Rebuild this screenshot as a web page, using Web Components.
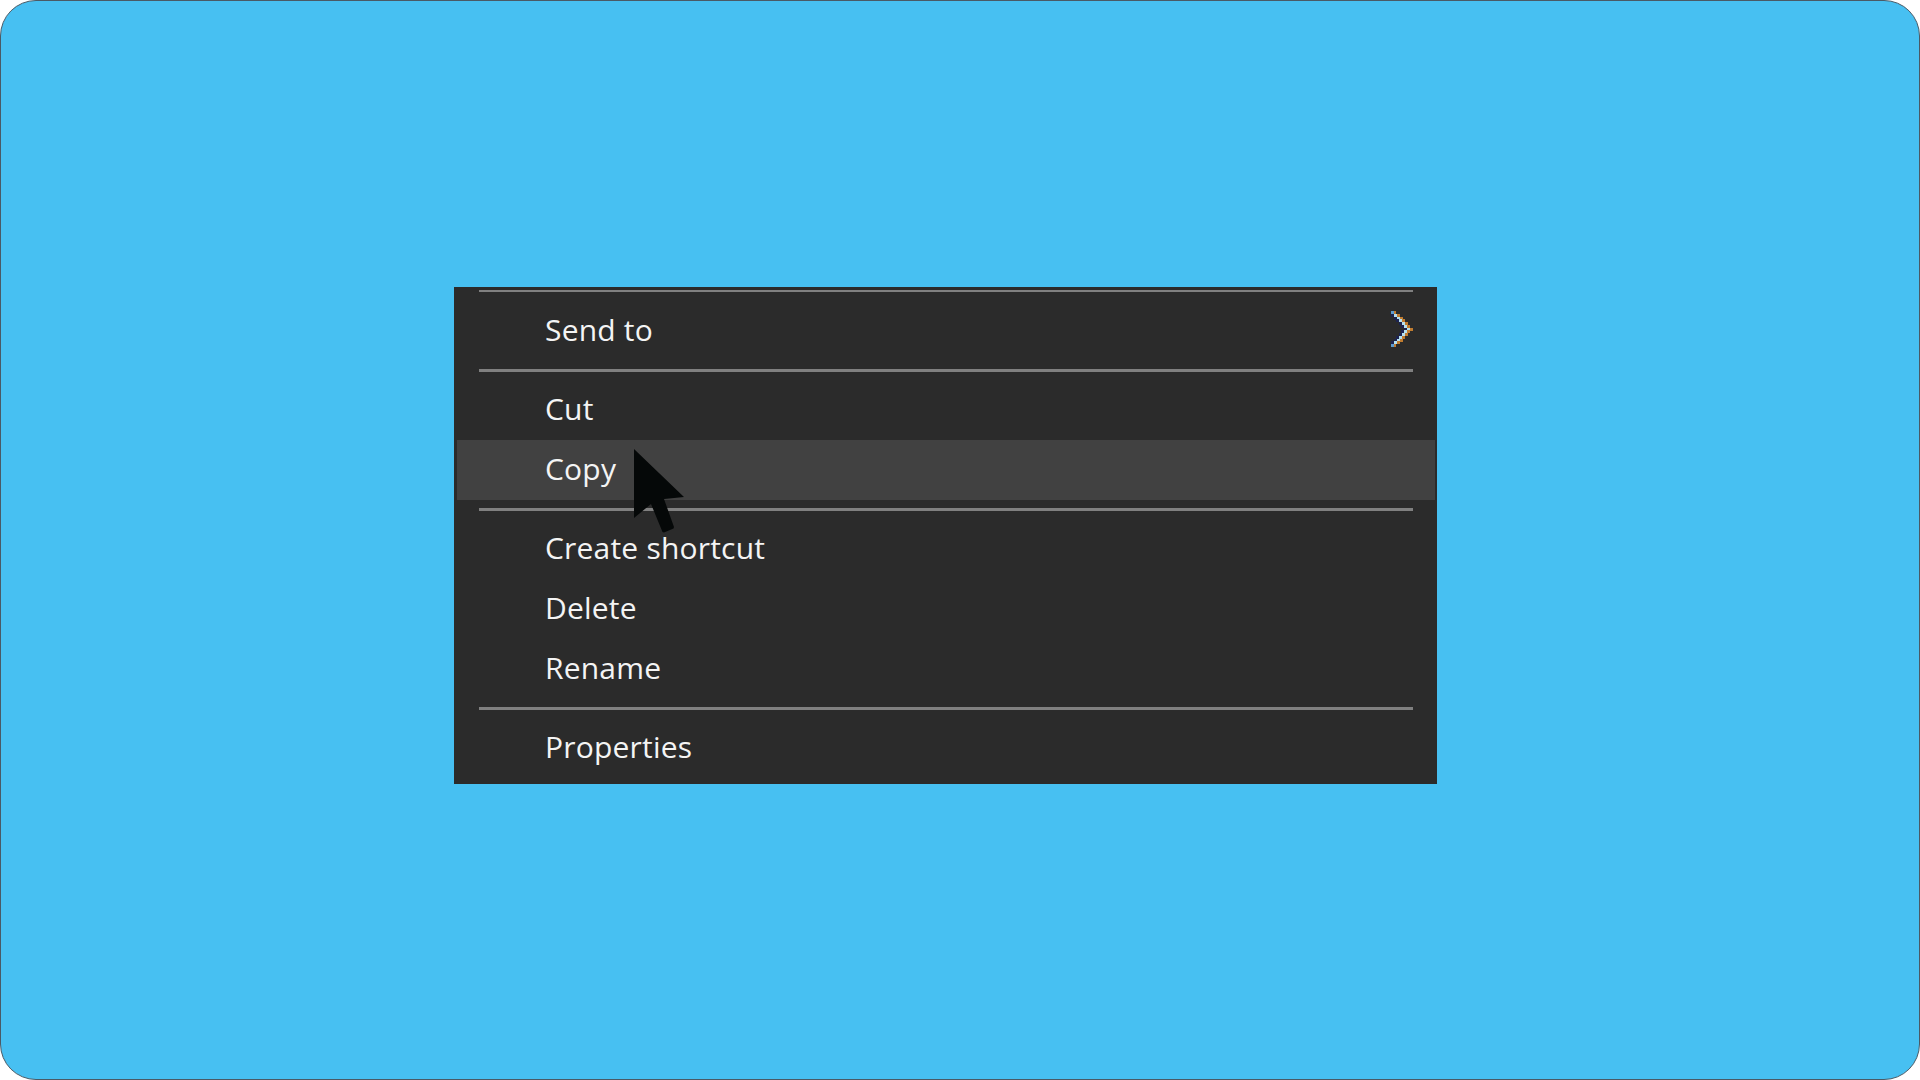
<!DOCTYPE html>
<html>
<head>
<meta charset="utf-8">
<title>Context menu</title>
<style>
  html, body { margin: 0; height: 100%; background: #fff; }
</style>
</head>
<body>
<desktop-stage>
  <context-menu>
    <menu-separator first></menu-separator>
    <menu-item submenu>Send to</menu-item>
    <menu-separator></menu-separator>
    <menu-item>Cut</menu-item>
    <menu-item hover>Copy</menu-item>
    <menu-separator></menu-separator>
    <menu-item>Create shortcut</menu-item>
    <menu-item>Delete</menu-item>
    <menu-item>Rename</menu-item>
    <menu-separator></menu-separator>
    <menu-item>Properties</menu-item>
  </context-menu>
  <mouse-cursor></mouse-cursor>
</desktop-stage>
<script>
// chevron is blocky subpixel text in the reference, so build it from 3px cells
function chevronCells() {
  let out = ''
  const cell = (x, y, w, h, fill) => `<rect x="${x}" y="${y}" width="${w}" height="${h}" fill="${fill}"/>`
  for (let i = 0; i <= 12; i++) {
    const row = Math.min(i, 12 - i)
    const y = i * 2.77
    if (row === 0) {
      out += cell(0, y, 3, 3, '#5b9bd0') + cell(3, y, 2, 3, '#c07c30')
      continue
    }
    const x = 3 + (row - 1) * 2.6
    out += cell(x - 3, y, 3, 3, '#1d2350')
    out += cell(x + 3, y, 3, 3, '#c07c30')
    out += cell(x, y, 3, 3, '#b5e0ee')
  }
  return out
}

class DesktopStage extends HTMLElement {
  connectedCallback() {
    const shadow = this.attachShadow({ mode: 'open' })
    shadow.innerHTML = `
      <style>
        :host {
          display: block;
          position: relative;
          width: 1920px;
          height: 1080px;
          box-sizing: border-box;
          padding: 287px 0 0 454px;
          background: #47C0F2;
          border: 1px solid #4a5a66;
          border-radius: 36px;
          overflow: hidden;
        }
      </style>
      <slot></slot>
    `
  }
}

class ContextMenu extends HTMLElement {
  connectedCallback() {
    const shadow = this.attachShadow({ mode: 'open' })
    shadow.innerHTML = `
      <style>
        :host {
          display: block;
          box-sizing: border-box;
          width: 983px;
          height: 497px;
          margin: -1px 0 0 -1px;
          padding: 3px 2px 6px 3px;
          background: #2B2B2B;
          color: #fff;
          font-family: 'Open Sans', 'Liberation Sans', sans-serif;
        }
      </style>
      <slot></slot>
    `
  }
}

class MenuItem extends HTMLElement {
  connectedCallback() {
    const shadow = this.attachShadow({ mode: 'open' })
    shadow.innerHTML = `
      <style>
        :host {
          display: flex;
          align-items: center;
          justify-content: space-between;
          box-sizing: border-box;
          height: 60px;
          padding: 0 22px 3px 88px;
          font-size: 30px;
          letter-spacing: 0.2px;
          white-space: nowrap;
          color: #f4f4f4;
        }
        :host([hover]) { background: #414141; }
        svg { display: block; margin-bottom: 1px; }
      </style>
      <span><slot></slot></span>
      ${this.hasAttribute('submenu') ? `
      <svg width="22" height="36" viewBox="0 0 22 36" shape-rendering="crispEdges">${chevronCells()}</svg>` : ''}
    `
  }
}

class MenuSeparator extends HTMLElement {
  connectedCallback() {
    const shadow = this.attachShadow({ mode: 'open' })
    shadow.innerHTML = `
      <style>
        :host {
          display: block;
          height: 3px;
          margin: 8px 22px;
          background: #808080;
        }
        :host([first]) { height: 2px; margin-top: 0; margin-bottom: 9px; }
      </style>
    `
  }
}

class MouseCursor extends HTMLElement {
  connectedCallback() {
    const shadow = this.attachShadow({ mode: 'open' })
    shadow.innerHTML = `
      <style>
        :host {
          display: block;
          position: absolute;
          left: 632px;
          top: 447px;
          width: 54px;
          height: 86px;
        }
        svg { display: block; }
      </style>
      <svg width="54" height="86" viewBox="0 0 54 86">
        <path d="M1 1 L51 49 L31 51 L41 79 L40.500 80.500 L31 84.500 L29.500 84 L18 56 L1 70 Z" fill="#050808"/>
      </svg>
    `
  }
}

customElements.define('desktop-stage', DesktopStage)
customElements.define('context-menu', ContextMenu)
customElements.define('menu-item', MenuItem)
customElements.define('menu-separator', MenuSeparator)
customElements.define('mouse-cursor', MouseCursor)
</script>
</body>
</html>
